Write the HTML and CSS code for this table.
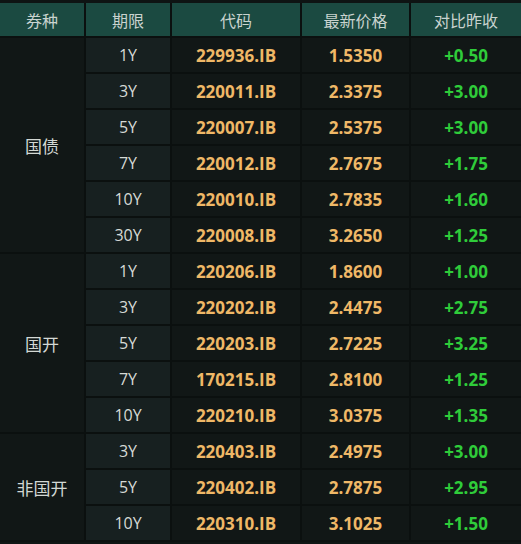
FILE: index.html
```html
<!DOCTYPE html>
<html lang="zh-CN">
<head>
  <meta charset="UTF-8" />
  <title>国债收益率</title>
  <link rel="stylesheet" href="styles.css">
</head>
<body>

<table class="rates">
  <thead>
    <tr>
      <th class="c-type">券种</th>
      <th class="c-term">期限</th>
      <th class="c-code">代码</th>
      <th class="c-price">最新价格</th>
      <th class="c-diff">对比昨收</th>
    </tr>
  </thead>
  <tbody>
    <tr>
      <td class="type" rowspan="6">国债</td>
      <td class="term">1Y</td><td class="code">229936.IB</td><td class="price">1.5350</td><td class="diff">+0.50</td>
    </tr>
    <tr><td class="term">3Y</td><td class="code">220011.IB</td><td class="price">2.3375</td><td class="diff">+3.00</td></tr>
    <tr><td class="term">5Y</td><td class="code">220007.IB</td><td class="price">2.5375</td><td class="diff">+3.00</td></tr>
    <tr><td class="term">7Y</td><td class="code">220012.IB</td><td class="price">2.7675</td><td class="diff">+1.75</td></tr>
    <tr><td class="term">10Y</td><td class="code">220010.IB</td><td class="price">2.7835</td><td class="diff">+1.60</td></tr>
    <tr><td class="term">30Y</td><td class="code">220008.IB</td><td class="price">3.2650</td><td class="diff">+1.25</td></tr>

    <tr>
      <td class="type" rowspan="5">国开</td>
      <td class="term">1Y</td><td class="code">220206.IB</td><td class="price">1.8600</td><td class="diff">+1.00</td>
    </tr>
    <tr><td class="term">3Y</td><td class="code">220202.IB</td><td class="price">2.4475</td><td class="diff">+2.75</td></tr>
    <tr><td class="term">5Y</td><td class="code">220203.IB</td><td class="price">2.7225</td><td class="diff">+3.25</td></tr>
    <tr><td class="term">7Y</td><td class="code">170215.IB</td><td class="price">2.8100</td><td class="diff">+1.25</td></tr>
    <tr><td class="term">10Y</td><td class="code">220210.IB</td><td class="price">3.0375</td><td class="diff">+1.35</td></tr>

    <tr>
      <td class="type" rowspan="3">非国开</td>
      <td class="term">3Y</td><td class="code">220403.IB</td><td class="price">2.4975</td><td class="diff">+3.00</td>
    </tr>
    <tr><td class="term">5Y</td><td class="code">220402.IB</td><td class="price">2.7875</td><td class="diff">+2.95</td></tr>
    <tr><td class="term">10Y</td><td class="code">220310.IB</td><td class="price">3.1025</td><td class="diff">+1.50</td></tr>
  </tbody>
</table>

</body>
</html>
```

FILE: styles.css
```css
body {
  margin: 0;
  background: #0e1413;
  font-family: "Open Sans", "Noto Sans CJK SC", sans-serif;
}

.rates {
  width: 521px;
  border-collapse: separate;
  border-spacing: 0;
  table-layout: fixed;
  margin-top: 3px;
}

.rates th,
.rates td {
  box-sizing: border-box;
  text-align: center;
  padding: 0;
  border-right: 2px solid #0b100f;
  border-bottom: 2px solid #0b100f;
}

.rates th:last-child,
.rates td:last-child {
  border-right: 0;
}

.rates th {
  height: 35px;
  background: #1b4a41;
  color: #c9d3cf;
  font-family: "Noto Sans CJK SC", sans-serif;
  font-weight: normal;
  font-size: 16px;
}

.c-type { width: 86px; }
.c-term { width: 86px; }
.c-code { width: 130px; }
.c-price { width: 109px; }

.rates td {
  height: 36px;
  font-size: 17px;
  background: #111716;
}

.type {
  background: #19231f;
  color: #d3d8d4;
  font-family: "Noto Sans CJK SC", sans-serif;
  font-size: 16px;
}

.rates td.term {
  background: #172020;
  color: #d6dad6;
  font-size: 16px;
}

.code,
.price {
  color: #efb867;
  font-weight: bold;
}

.diff {
  color: #2fcc3a;
  font-weight: bold;
}
```
